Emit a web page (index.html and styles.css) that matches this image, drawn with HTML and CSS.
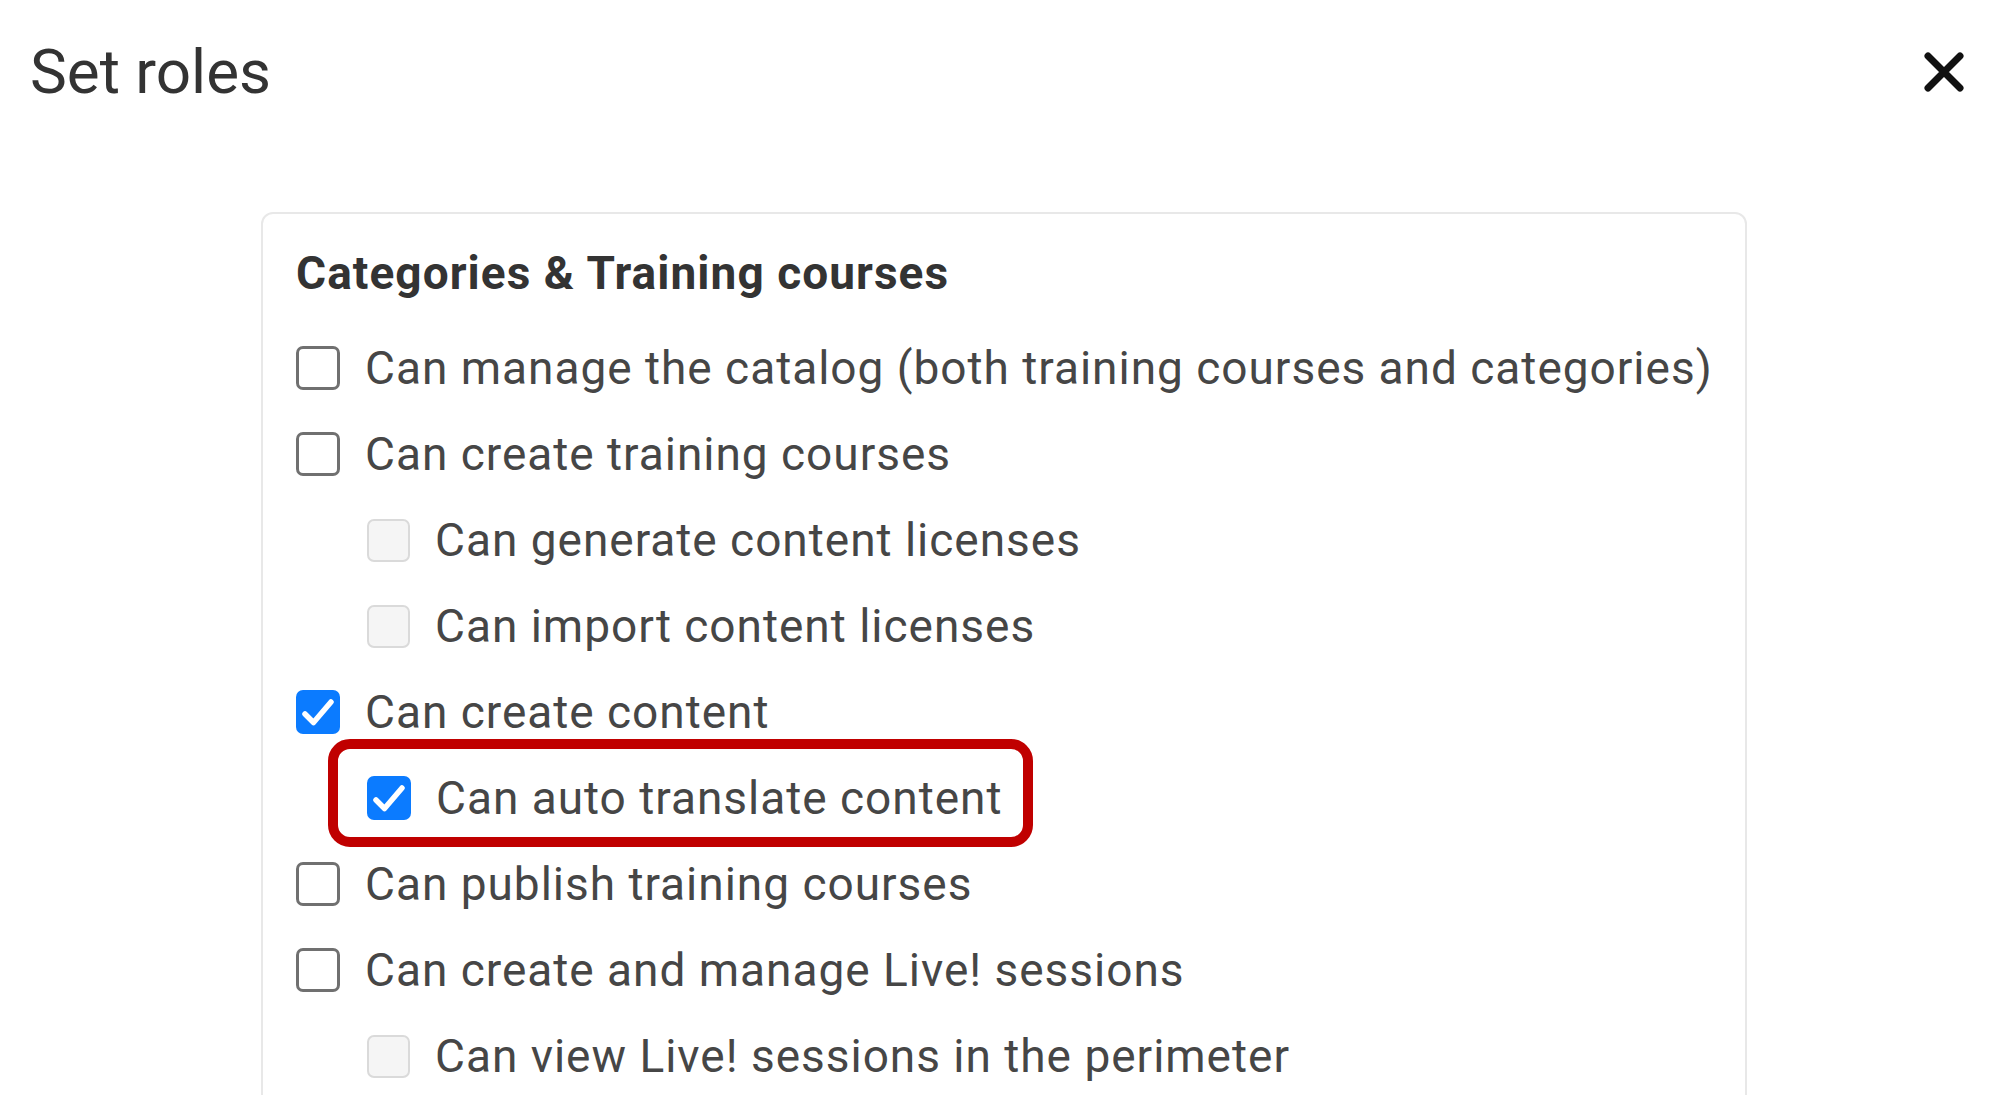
FILE: index.html
```html
<!DOCTYPE html>
<html lang="en">
<head>
<meta charset="utf-8">
<title>Set roles</title>
<link rel="stylesheet" href="styles.css">
</head>
<body>
<header class="header">
  <h1 class="title">Set roles</h1>
  <button class="close" aria-label="Close">
    <svg viewBox="0 0 40 40" width="40" height="40"><path d="M4 4 L36 36 M36 4 L4 36" stroke="#111" stroke-width="7" stroke-linecap="round"/></svg>
  </button>
</header>
<section class="card">
  <h2 class="card-title">Categories &amp; Training courses</h2>
  <ul class="roles">
    <li class="role"><span class="box"></span><span class="label">Can manage the catalog (both training courses and categories)</span></li>
    <li class="role"><span class="box"></span><span class="label">Can create training courses</span></li>
    <li class="role sub"><span class="box disabled"></span><span class="label">Can generate content licenses</span></li>
    <li class="role sub"><span class="box disabled"></span><span class="label">Can import content licenses</span></li>
    <li class="role"><span class="box checked"><svg viewBox="0 0 44 44"><path d="M9 24 L17.5 32.5 L35 12" fill="none" stroke="#fff" stroke-width="5.5" stroke-linecap="round" stroke-linejoin="round"/></svg></span><span class="label">Can create content</span></li>
    <li class="role sub highlight"><span class="box checked"><svg viewBox="0 0 44 44"><path d="M9 24 L17.5 32.5 L35 12" fill="none" stroke="#fff" stroke-width="5.5" stroke-linecap="round" stroke-linejoin="round"/></svg></span><span class="label">Can auto translate content</span></li>
    <li class="role"><span class="box"></span><span class="label">Can publish training courses</span></li>
    <li class="role"><span class="box"></span><span class="label">Can create and manage Live! sessions</span></li>
    <li class="role sub"><span class="box disabled"></span><span class="label">Can view Live! sessions in the perimeter</span></li>
  </ul>
</section>
</body>
</html>
```

FILE: styles.css
```css
html, body {
  margin: 0;
  padding: 0;
  background: #fff;
  overflow: hidden;
}
body {
  font-family: Roboto, "Liberation Sans", Arial, sans-serif;
  color: #404040;
}
.header {
  display: flex;
  justify-content: space-between;
  align-items: center;
  padding: 36px 48px 0 30px;
}
.title {
  margin: 0;
  font-size: 62px;
  line-height: 72px;
  font-weight: 400;
  color: #333;
}
.close {
  border: 0;
  background: none;
  padding: 0;
  width: 40px;
  height: 40px;
  display: flex;
  cursor: pointer;
}
.card {
  margin: 104px 0 0 261px;
  width: 1486px;
  border: 2px solid #e8e8e8;
  border-radius: 12px;
  padding: 31px 0 60px 33px;
  box-sizing: border-box;
}
.card-title {
  margin: 0 0 24px 0;
  font-size: 46px;
  line-height: 56px;
  font-weight: 700;
  letter-spacing: 1.05px;
  color: #333;
}
.roles {
  list-style: none;
  margin: 0;
  padding: 0;
}
.role {
  display: flex;
  align-items: center;
  height: 86px;
  gap: 25px;
  font-size: 46px;
  position: relative;
}
.role.sub {
  margin-left: 71px;
}
.box {
  width: 44px;
  height: 44px;
  box-sizing: border-box;
  border: 3px solid #707070;
  border-radius: 7px;
  flex: none;
  display: flex;
}
.box.disabled {
  border: 2.5px solid #dadada;
  background: #f5f5f5;
  width: 43px;
  height: 43px;
}
.box.checked {
  border: 0;
  background: #0b7bff;
}
.box svg {
  width: 100%;
  height: 100%;
}
.label {
  white-space: nowrap;
  letter-spacing: 0.98px;
  color: #464646;
}
.highlight::after {
  content: "";
  position: absolute;
  left: -39px;
  top: -16px;
  width: 705px;
  height: 108px;
  box-sizing: border-box;
  border: 10px solid #c00000;
  border-radius: 22px;
  pointer-events: none;
}
```
